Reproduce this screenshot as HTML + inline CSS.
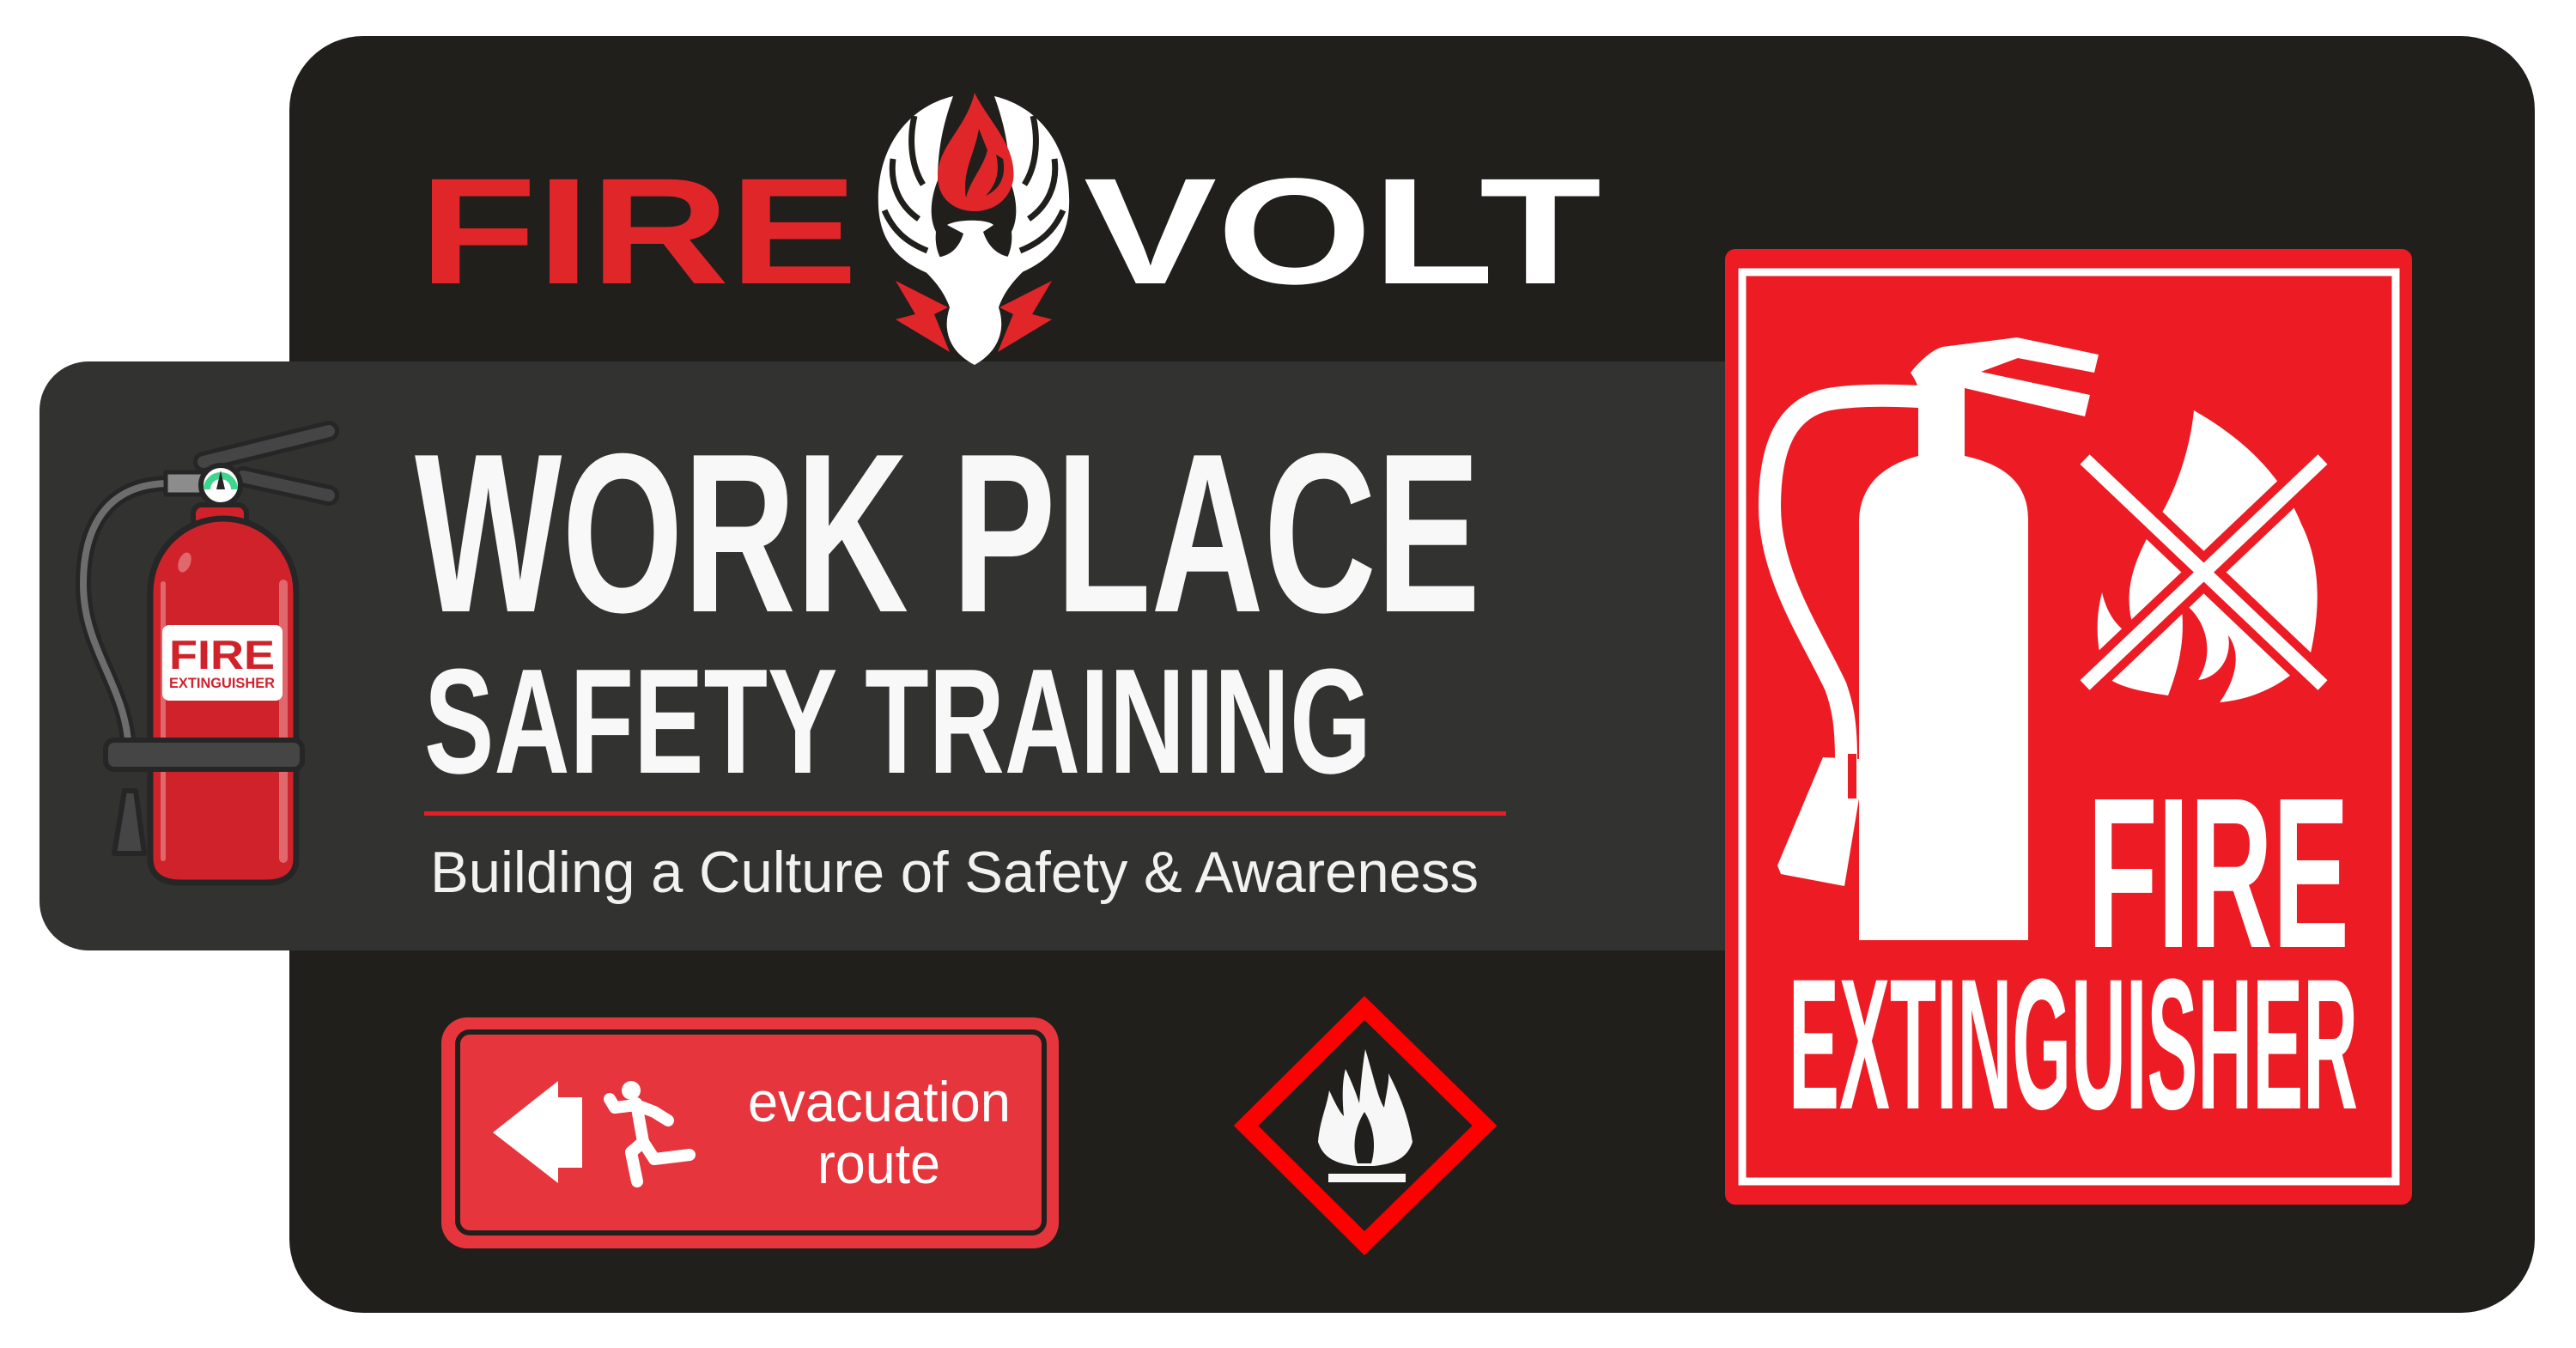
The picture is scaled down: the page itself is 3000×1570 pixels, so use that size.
<!DOCTYPE html>
<html><head><meta charset="utf-8"><style>
html,body{margin:0;padding:0;background:#fff;width:3000px;height:1570px;overflow:hidden}
svg{display:block}
text{font-family:"Liberation Sans Narrow","Liberation Sans",sans-serif;font-weight:bold}
</style></head><body>
<svg width="3000" height="1570" viewBox="0 0 3000 1570" xmlns="http://www.w3.org/2000/svg">
<rect width="3000" height="1570" fill="#fff"/>
<rect x="337" y="42" width="2615" height="1487" rx="86" fill="#201f1c"/>
<path d="M103,421 H2020 V1107 H103 A57,57 0 0 1 46,1050 V478 A57,57 0 0 1 103,421 Z" fill="#323230"/>

<text x="488" y="330" font-size="176" textLength="511" lengthAdjust="spacingAndGlyphs" fill="#e1262a" style="font-family:'Liberation Sans',sans-serif">FIRE</text>
<text x="1262" y="330" font-size="176" textLength="603" lengthAdjust="spacingAndGlyphs" fill="#fff" style="font-family:'Liberation Sans',sans-serif">VOLT</text>
<g>
 <path d="M1110,112 C1055,125 1020,175 1023,240 C1025,285 1050,305 1080,318 L1110,322 C1095,305 1088,290 1090,270 C1080,250 1086,225 1092,210 C1092,170 1100,140 1110,112 Z" fill="#fff"/>
 <path d="M1158,112 C1213,125 1248,175 1245,240 C1243,285 1218,305 1188,318 L1158,322 C1173,305 1180,290 1178,270 C1188,250 1182,225 1176,210 C1176,170 1168,140 1158,112 Z" fill="#fff"/>
 <g stroke="#201f1c" stroke-width="7" fill="none">
  <path d="M1065,135 C1058,165 1062,195 1075,215"/><path d="M1040,185 C1036,215 1048,240 1070,255"/><path d="M1030,245 C1040,268 1055,282 1080,292"/>
  <path d="M1203,135 C1210,165 1206,195 1193,215"/><path d="M1228,185 C1232,215 1220,240 1198,255"/><path d="M1238,245 C1228,268 1213,282 1188,292"/>
 </g>
 <path d="M1135,108 C1150,140 1185,170 1180,210 C1175,235 1155,246 1135,246 C1112,246 1092,232 1092,205 C1092,170 1125,150 1135,108 Z" fill="#e1262a"/>
 <path d="M1140,150 C1135,180 1120,200 1125,230 C1130,210 1145,195 1150,175 Z M1160,180 C1165,200 1160,215 1148,228 C1165,220 1172,205 1168,185 Z" fill="#201f1c"/>
 <path d="M1103,262 C1115,255 1150,255 1157,262 L1145,270 C1150,285 1160,298 1180,300 L1205,305 C1185,320 1170,338 1163,358 C1172,385 1162,410 1135,425 C1106,410 1097,385 1106,358 C1099,338 1084,320 1064,305 L1090,300 C1110,298 1118,285 1122,272 Z" fill="#fff"/>
 <path d="M1043,327 L1104,358 L1088,366 L1106,410 L1043,372 L1066,366 Z" fill="#e1262a"/>
 <path d="M1225,327 L1164,358 L1180,366 L1162,410 L1225,372 L1202,366 Z" fill="#e1262a"/>
</g>

<text x="483" y="712" font-size="264" textLength="1241" lengthAdjust="spacingAndGlyphs" fill="#f8f8f8">WORK PLACE</text>
<text x="494" y="900" font-size="174" textLength="1103" lengthAdjust="spacingAndGlyphs" fill="#f8f8f8">SAFETY TRAINING</text>
<rect x="494" y="945" width="1260" height="5" fill="#e31e25"/>
<text x="501" y="1039" font-size="68" textLength="1221" lengthAdjust="spacingAndGlyphs" fill="#f2f2f2" style="font-weight:normal;font-family:'Liberation Sans',sans-serif">Building a Culture of Safety &amp; Awareness</text>

<g stroke-linecap="round" stroke-linejoin="round">
 <path d="M198,563 C120,563 97,620 97,680 C97,760 150,800 150,880" fill="none" stroke="#262626" stroke-width="18"/>
 <path d="M198,563 C120,563 97,620 97,680 C97,760 150,800 150,880" fill="none" stroke="#6d6d6d" stroke-width="8"/>
 <path d="M237,538 L383,502" stroke="#262626" stroke-width="24"/>
 <path d="M237,538 L383,502" stroke="#454545" stroke-width="14"/>
 <path d="M283,555 L383,577" stroke="#262626" stroke-width="24"/>
 <path d="M283,555 L383,577" stroke="#454545" stroke-width="14"/>
 <rect x="193" y="550" width="46" height="26" fill="#8c8c8c" stroke="#262626" stroke-width="5"/>
 <rect x="225" y="588" width="62" height="26" rx="10" fill="#d0222a" stroke="#262626" stroke-width="6"/>
 <path d="M175,1000 V690 C175,640 215,604 260,604 C305,604 345,640 345,690 V1000 C345,1020 330,1028 310,1028 H210 C190,1028 175,1020 175,1000 Z" fill="#d0222a" stroke="#262626" stroke-width="7"/>
 <path d="M330,680 V1000" stroke="#e0676b" stroke-width="10"/>
 <path d="M190,680 V1000" stroke="#e0676b" stroke-width="6"/>
 <ellipse cx="215" cy="655" rx="7" ry="12" fill="#e0676b" transform="rotate(20 215 655)"/>
 <circle cx="257" cy="565" r="23" fill="#fff" stroke="#262626" stroke-width="6"/>
 <path d="M241,570 A16,16 0 0 1 273,570" fill="none" stroke="#3dd68c" stroke-width="8" stroke-linecap="butt"/>
 <path d="M257,548 L262,570 L252,570 Z" fill="#262626"/>
 <rect x="189" y="728" width="140" height="88" rx="8" fill="#fff"/>
 <text x="197" y="779" font-size="47" textLength="123" lengthAdjust="spacingAndGlyphs" fill="#d0222a" style="font-family:'Liberation Sans',sans-serif">FIRE</text>
 <text x="197" y="801" font-size="17" textLength="123" lengthAdjust="spacingAndGlyphs" fill="#d0222a" style="font-family:'Liberation Sans',sans-serif">EXTINGUISHER</text>
 <rect x="123" y="862" width="229" height="34" rx="10" fill="#454545" stroke="#262626" stroke-width="6"/>
 <path d="M145,921 H158 L168,994 H133 Z" fill="#454545" stroke="#262626" stroke-width="6"/>
</g>

<rect x="514" y="1185" width="719" height="269" rx="30" fill="#e6353d"/>
<rect x="533" y="1202" width="683" height="234" rx="14" fill="none" stroke="#201f1c" stroke-width="6"/>
<path d="M574,1319 L650,1259 V1278 H678 V1360 H650 V1378 Z" fill="#fff"/>
<circle cx="735" cy="1270" r="11" fill="#fff"/>
<g stroke="#fff" stroke-width="14" stroke-linecap="round" stroke-linejoin="round" fill="none">
 <path d="M741,1285 L749,1330"/>
 <path d="M749,1330 L735,1342 L742,1376"/>
 <path d="M749,1330 L762,1350 L803,1345"/>
 <path d="M741,1287 L716,1290 L710,1280"/>
 <path d="M741,1287 L762,1295 L778,1305"/>
</g>
<text x="871" y="1306" font-size="66" textLength="306" lengthAdjust="spacingAndGlyphs" fill="#fff" style="font-weight:normal;font-family:'Liberation Sans',sans-serif">evacuation</text>
<text x="952" y="1378" font-size="66" textLength="143" lengthAdjust="spacingAndGlyphs" fill="#fff" style="font-weight:normal;font-family:'Liberation Sans',sans-serif">route</text>

<path d="M1589,1174 L1729,1311 L1589,1448 L1451,1311 Z" fill="none" stroke="#ff0000" stroke-width="20" stroke-linejoin="miter"/>
<path d="M1590,1222 C1600,1255 1605,1280 1612,1290 C1615,1270 1618,1260 1617,1250 C1630,1275 1640,1300 1645,1330 C1640,1345 1630,1355 1600,1358 L1580,1358 C1550,1355 1540,1345 1535,1330 C1537,1305 1545,1290 1548,1270 C1555,1285 1560,1295 1565,1300 C1563,1280 1563,1260 1567,1245 C1575,1262 1580,1275 1583,1285 C1585,1260 1587,1240 1590,1222 Z" fill="#f7f7f7"/>
<path d="M1589,1295 C1600,1312 1603,1335 1597,1355 L1581,1355 C1574,1335 1578,1312 1589,1295 Z" fill="#201f1c"/>
<rect x="1547" y="1367" width="90" height="10" fill="#f7f7f7"/>

<rect x="2009" y="290" width="800" height="1113" rx="12" fill="#ed1c24"/>
<rect x="2029" y="317" width="761" height="1059" fill="none" stroke="#fff" stroke-width="9"/>
<path d="M2234,449 L2288,449 L2288,531 C2330,540 2362,560 2362,605 L2362,1095 L2165,1095 L2165,610 C2165,560 2200,540 2234,531 Z" fill="#fff"/>
<path d="M2225,434 C2238,418 2250,408 2262,404 L2349,393 L2444,413 L2439,434 L2350,417 L2307,433 L2434,460 L2428,485 L2288,452 L2288,470 L2234,470 L2234,452 C2232,445 2229,440 2225,434 Z" fill="#fff"/>
<path d="M2236,462 C2200,460 2160,460 2130,465 C2080,475 2061,520 2061,590 C2061,670 2110,740 2138,800 C2145,820 2150,840 2150,885" fill="none" stroke="#fff" stroke-width="26"/>
<path d="M2123,882 L2165,884 L2165,930 L2148,1032 L2074,1018 L2070,1008 Z" fill="#fff"/>
<rect x="2152" y="878" width="10" height="52" fill="#ed1c24"/>
<path d="M2555,478 C2620,515 2660,560 2680,610 C2700,650 2705,700 2690,765 C2660,800 2620,815 2585,818 C2605,790 2610,760 2595,740 C2600,770 2580,790 2560,792 C2580,760 2570,720 2540,700 C2545,740 2540,770 2525,810 C2490,805 2470,800 2455,790 C2440,760 2440,720 2448,690 C2455,720 2470,735 2490,745 C2470,700 2480,660 2510,610 C2530,580 2550,530 2555,478 Z" fill="#fff"/>
<g stroke-linecap="butt">
 <path d="M2428,535 L2705,798 M2705,535 L2428,798" stroke="#ed1c24" stroke-width="36"/>
 <path d="M2428,535 L2705,798 M2705,535 L2428,798" stroke="#fff" stroke-width="16"/>
</g>
<text x="2431" y="1103" font-size="250" textLength="305" lengthAdjust="spacingAndGlyphs" fill="#fff">FIRE</text>
<text x="2083" y="1291" font-size="217" textLength="663" lengthAdjust="spacingAndGlyphs" fill="#fff">EXTINGUISHER</text>
</svg>
</body></html>
